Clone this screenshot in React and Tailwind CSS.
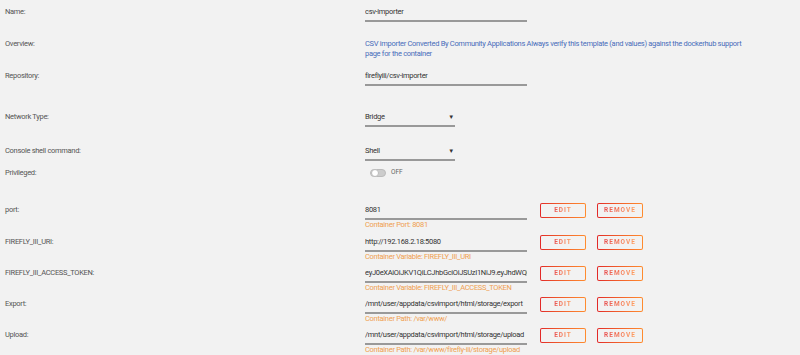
const font = { fontFamily: 'Roboto, "Liberation Sans", sans-serif' };

function Buttons() {
  return (
    <div className="flex gap-[11px] ml-[13px] -mt-[2px]">
      {["EDIT", "REMOVE"].map((b) => (
        <div
          key={b}
          className="w-[46px] h-[15px] rounded-[2px] p-[1px] bg-gradient-to-r from-[#e22828] to-[#ff8c2f]"
        >
          <div className="w-full h-full bg-[#f2f2f2] rounded-[1px] flex items-center justify-center">
            <span className="text-[6.5px] font-bold tracking-[1px] bg-gradient-to-r from-[#e85050] to-[#ffa060] bg-clip-text text-transparent">
              {b}
            </span>
          </div>
        </div>
      ))}
    </div>
  );
}

function TextInput({ value, sub }) {
  return (
    <div className="w-[162px]">
      <div className="h-[10px] leading-[10px] overflow-hidden whitespace-nowrap text-[#333]">{value}</div>
      <div className="mt-[3px] h-[2px] bg-[#999]" />
      {sub && <div className="h-[10px] leading-[10px] text-[#f0a050] whitespace-nowrap">{sub}</div>}
    </div>
  );
}

function Select({ value }) {
  return (
    <div className="w-[90px]">
      <div className="h-[10px] leading-[10px] flex justify-between text-[#333]">
        <span>{value}</span>
        <span className="text-[6px] pr-[1px]">▼</span>
      </div>
      <div className="mt-[3px] h-[2px] bg-[#999]" />
    </div>
  );
}

function Row({ label, h, children }) {
  return (
    <div className="flex" style={{ height: h }}>
      <div className="w-[365px] pl-[5px] h-[10px] leading-[10px] text-[#555] shrink-0">{label}</div>
      <div className="flex items-start">{children}</div>
    </div>
  );
}

export default function App() {
  return (
    <div
      className="w-[800px] h-[355px] bg-[#f2f2f2] pt-[7px] text-[7.5px] tracking-[-0.3px] overflow-hidden"
      style={font}
    >
      <Row label="Name:" h={32}>
        <TextInput value="csv-importer" />
      </Row>
      <Row label="Overview:" h={32}>
        <div className="leading-[10px] text-[#486dba] whitespace-nowrap">
          <div>
            CSV importer Converted By Community Applications Always verify this template (and values) against the
            dockerhub support
          </div>
          <div>page for the container</div>
        </div>
      </Row>
      <Row label="Repository:" h={41}>
        <TextInput value="fireflyiii/csv-importer" />
      </Row>
      <Row label="Network Type:" h={34}>
        <Select value="Bridge" />
      </Row>
      <Row label="Console shell command:" h={22}>
        <Select value="Shell" />
      </Row>
      <Row label="Privileged:" h={37}>
        <div className="flex items-center ml-[5px] h-[10px]">
          <div className="w-[16px] h-[8px] rounded-full bg-[#ccc] border border-[#bbb] relative">
            <div className="absolute left-0 top-[-1px] w-[8px] h-[8px] rounded-full bg-white border border-[#bbb]" />
          </div>
          <span className="ml-[5px] text-[6.5px] tracking-normal text-[#666]">OFF</span>
        </div>
      </Row>
      <Row label="port:" h={32}>
        <TextInput value="8081" sub="Container Port: 8081" />
        <Buttons />
      </Row>
      <Row label="FIREFLY_III_URI:" h={31}>
        <TextInput value="http://192.168.2.18:5080" sub="Container Variable: FIREFLY_III_URI" />
        <Buttons />
      </Row>
      <Row label="FIREFLY_III_ACCESS_TOKEN:" h={31}>
        <TextInput
          value="eyJ0eXAiOiJKV1QiLCJhbGciOiJSUzI1NiJ9.eyJhdWQi"
          sub="Container Variable: FIREFLY_III_ACCESS_TOKEN"
        />
        <Buttons />
      </Row>
      <Row label="Export:" h={31}>
        <TextInput value="/mnt/user/appdata/csvimport/html/storage/export" sub="Container Path: /var/www/" />
        <Buttons />
      </Row>
      <Row label="Upload:" h={31}>
        <TextInput
          value="/mnt/user/appdata/csvimport/html/storage/upload"
          sub="Container Path: /var/www/firefly-iii/storage/upload"
        />
        <Buttons />
      </Row>
    </div>
  );
}
